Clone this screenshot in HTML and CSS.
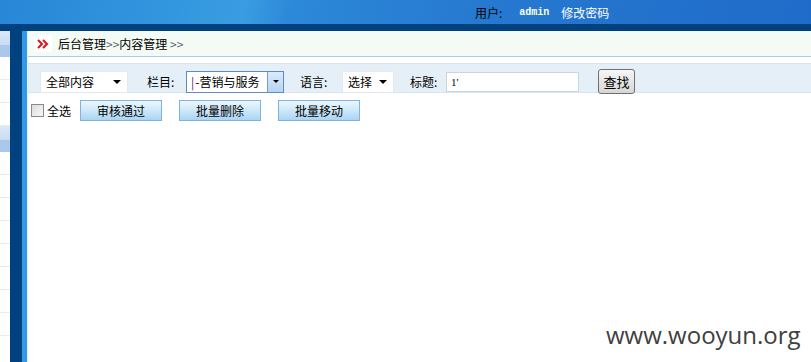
FILE: index.html
```html
<!DOCTYPE html>
<html>
<head>
    <title>内容管理</title>
    <link rel="stylesheet" href="styles.css">
</head>
<body>
    <div class="top">
        <div class="userbar">
            <span class="user-lbl">用户:</span>
            <span class="user-name">admin</span>
            <a class="user-pwd">修改密码</a>
        </div>
    </div>
    <div class="strip"></div>

    <div class="frame">
        <div class="side">
            <div class="side-head"></div>
            <div class="side-row"></div>
            <div class="side-row"></div>
            <div class="side-row"></div>
            <div class="side-head"></div>
            <div class="side-row"></div>
            <div class="side-row"></div>
            <div class="side-row"></div>
            <div class="side-row"></div>
            <div class="side-row"></div>
            <div class="side-row"></div>
            <div class="side-row"></div>
            <div class="side-row"></div>
        </div>
        <div class="divider"></div>

        <div class="main">
            <div class="crumb">
                <span class="crumb-icon">
                    <svg width="12" height="10" viewBox="0 0 12 10">
                        <path d="M1 1 L5 5 L1 9 M6 1 L10 5 L6 9" fill="none" stroke="#e0101c" stroke-width="2"/>
                    </svg>
                </span>
                <span class="crumb-text">后台管理<span class="sep">&gt;&gt;</span>内容管理 <span class="sep">&gt;&gt;</span></span>
            </div>

            <div class="search">
                <div class="sel sel-all">全部内容<span class="arrow"></span></div>
                <span class="lbl lbl-col">栏目:</span>
                <div class="sel sel-col"><span class="caret">|</span>-营销与服务<span class="drop"><span class="arrow"></span></span></div>
                <span class="lbl lbl-lang">语言:</span>
                <div class="sel sel-lang">选择<span class="arrow"></span></div>
                <span class="lbl lbl-title">标题:</span>
                <div class="txt">1'</div>
                <button class="btn-find">查找</button>
            </div>

            <div class="actions">
                <span class="chk"></span>
                <span class="chk-lbl">全选</span>
                <button class="btn">审核通过</button>
                <button class="btn">批量删除</button>
                <button class="btn">批量移动</button>
            </div>
        </div>
    </div>

    <div class="mark">www.wooyun.org</div>
</body>
</html>
```

FILE: styles.css
```css
body { margin: 0; font-family: "Noto Sans CJK SC", "Noto Sans", sans-serif; font-size: 12px; color: #000; background: #fff; overflow: hidden; }

.top { height: 24px; background: linear-gradient(100deg, #2886d6 0%, #3397df 22%, #3a9de2 30%, #2c88d8 36%, #2679d0 60%, #1f6bc9 100%); }
.userbar { display: flex; align-items: center; height: 24px; padding-left: 475px; }
.user-lbl { color: #000; }
.user-name { margin-left: 17px; color: #fff; font-family: "Liberation Mono", monospace; font-size: 10px; font-weight: bold; }
.user-pwd { margin-left: 12px; color: #fff; font-size: 12px; }
.strip { height: 7px; background: #00417f; }

.frame { display: flex; height: 331px; }
.side { width: 10px; background: #fff; }
.side-head { height: 26px; background: linear-gradient(#dbe8f8 0, #c8dcf3 14px, #a9c8ec 14px, #a9c8ec 100%); }
.side-row { height: 22px; border-bottom: 1px solid #e6efe6; }
.divider { width: 17px; background: linear-gradient(to right, #00417f 12px, #3399e6 12px); }

.main { flex: 1; border-left: 1px solid #e2f0fa; }

.crumb { display: flex; align-items: center; height: 25px; background: #f4fbf4; border-bottom: 1px solid #a6cbee; }
.crumb-icon { display: flex; align-items: center; justify-content: center; width: 18px; height: 17px; margin-left: 6px; background: #fff; }
.crumb-text { margin-left: 6px; }
.sep { color: #5a6478; font-size: 12px; }

.search { display: flex; align-items: center; height: 30px; margin-top: 6px; padding: 7px 0 0 12px; box-sizing: border-box; background: #e5eff7; border-top: 1px solid #d6e6f3; border-bottom: 1px solid #d6e6f3; }
.sel { display: flex; align-items: center; height: 22px; box-sizing: border-box; background: #fff; border: 1px solid #e2e8ee; padding-left: 5px; position: relative; }
.sel-all { width: 88px; }
.sel-col { width: 98px; border-color: #5b8cc6; padding-left: 4px; }
.sel-lang { width: 52px; }
.arrow { width: 0; height: 0; border-left: 4px solid transparent; border-right: 4px solid transparent; border-top: 4px solid #000; margin-left: auto; margin-right: 6px; }
.caret { color: #5a1870; margin-right: 1px; }
.drop { display: flex; align-items: center; justify-content: center; width: 15px; height: 20px; margin-left: auto; background: linear-gradient(#dcebfa, #b6d4f2); border-left: 1px solid #6d9ed6; }
.drop .arrow { margin: 0; border-left-width: 3px; border-right-width: 3px; border-top-width: 3px; }
.lbl { white-space: nowrap; }
.lbl-col { margin-left: 19px; width: 39px; }
.lbl-lang { margin-left: 16px; width: 42px; }
.lbl-title { margin-left: 16px; width: 36px; }
.txt { width: 133px; height: 20px; box-sizing: border-box; background: #fff; border: 1px solid #c9d6e2; padding: 2px 4px; font-family: "Liberation Serif", serif; font-size: 11px; line-height: 14px; }
.btn-find { margin-left: 19px; width: 37px; height: 25px; padding: 0; font-family: inherit; font-size: 13px; background: linear-gradient(#f6f6f6, #d6d6d6); border: 1px solid #707070; border-radius: 3px; }

.actions { display: flex; align-items: center; height: 21px; margin-top: 7px; padding-left: 3px; }
.chk { width: 13px; height: 13px; box-sizing: border-box; border: 1px solid #8a8a8a; background: linear-gradient(135deg, #dcdcdc, #f8f8f8); }
.chk-lbl { margin-left: 3px; font-size: 12px; }
.btn { width: 82px; height: 21px; margin-left: 17px; padding: 0; font-family: inherit; font-size: 12px; background: linear-gradient(#ecf7fd, #c6e4f8 60%, #aad4f2); border: 1px solid #80b4de; }
.actions .chk-lbl + .btn { margin-left: 9px; }

.mark { position: absolute; left: 606px; top: 318px; font-family: "Open Sans", sans-serif; font-size: 24px; color: #404040; }
```
